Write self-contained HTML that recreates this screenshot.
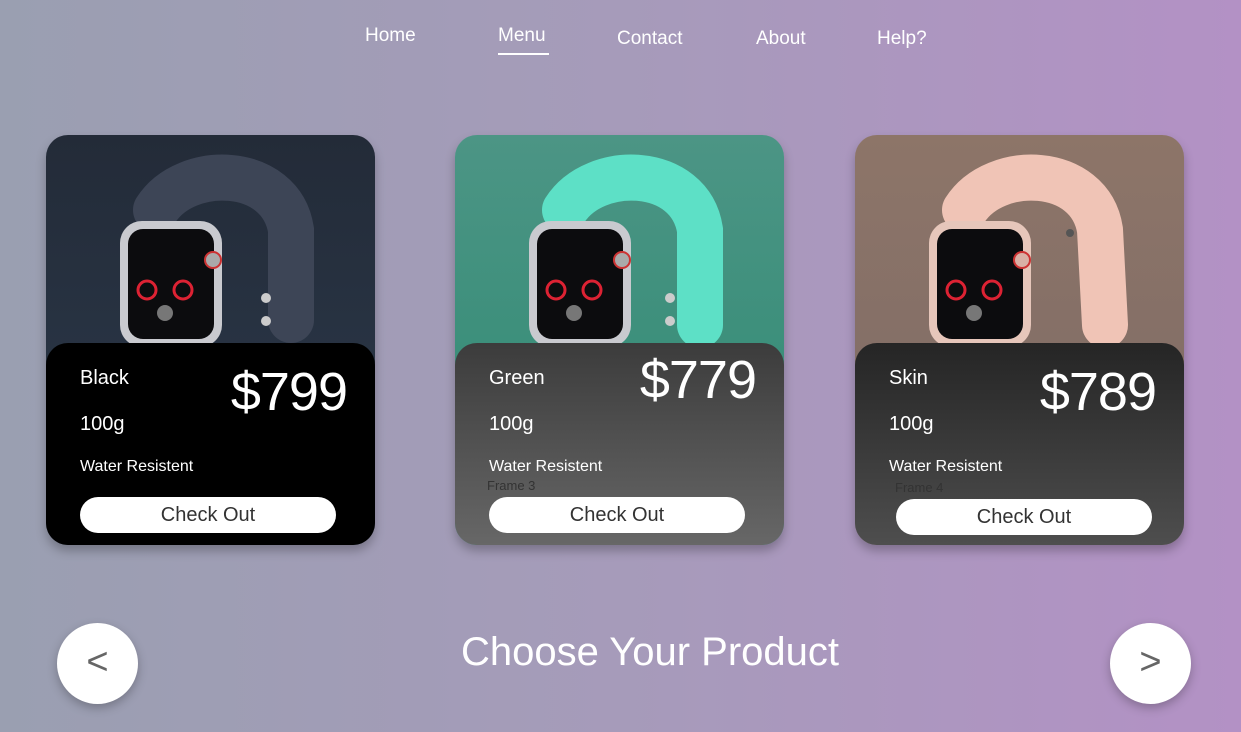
<!DOCTYPE html>
<html><head><style>
*{margin:0;padding:0;box-sizing:border-box}
body{width:1241px;height:732px;overflow:hidden;font-family:"Liberation Sans",sans-serif;background:linear-gradient(90deg,#9a9fb1 0%,#a69bba 50%,#b391c5 100%);position:relative}
.nav{position:absolute;color:#fff;font-size:19px;top:26px}
.card{position:absolute;top:135px;width:329px;height:410px;border-radius:22px;overflow:hidden;box-shadow:0 6px 10px rgba(0,0,0,.25)}
.card svg{position:absolute;left:0;top:0}
.info{position:absolute;left:0;top:208px;width:329px;height:202px;border-radius:22px 22px 0 0;color:#fff}
.t{position:absolute;left:34px;font-weight:300}
.price{position:absolute;right:28px;font-size:54px;font-weight:300;letter-spacing:-1px}
.btn{position:absolute;left:34px;top:154px;width:256px;height:36px;background:#fff;border-radius:18px;color:#333;font-size:20px;text-align:center;line-height:36px}
.frame{position:absolute;left:32px;font-size:13px;color:#333}
.circ{position:absolute;top:623px;width:81px;height:81px;border-radius:50%;background:#fff;box-shadow:0 4px 10px rgba(0,0,0,.25);color:#666;font-size:38px;text-align:center;line-height:78px}
</style></head><body>
<div class="nav" style="left:365px;top:25px">Home</div>
<div class="nav" style="left:498px;top:25px">Menu</div>
<div style="position:absolute;left:498px;top:53px;width:51px;height:2px;background:#fff"></div>
<div class="nav" style="left:617px;top:28px">Contact</div>
<div class="nav" style="left:756px;top:28px">About</div>
<div class="nav" style="left:877px;top:28px">Help?</div>

<!-- card 1 -->
<div class="card" style="left:46px;background:linear-gradient(180deg,#232b38,#2c3a4c)">
<svg width="329" height="410"><path d="M110 75 C140 28 235 30 245 95 L245 185" stroke="#3d4556" stroke-width="46" fill="none" stroke-linecap="round"/><circle cx="220" cy="163" r="5" fill="#ccc"/><circle cx="220" cy="186" r="5" fill="#ccc"/>
<rect x="74" y="86" width="102" height="126" rx="22" fill="#c9cacf"/><rect x="82" y="94" width="86" height="110" rx="15" fill="#0c0c0e"/><circle cx="167" cy="125" r="8" fill="#aaa" stroke="#c33" stroke-width="2"/><circle cx="101" cy="155" r="9" fill="none" stroke="#d23" stroke-width="3"/><circle cx="137" cy="155" r="9" fill="none" stroke="#d23" stroke-width="3"/><circle cx="119" cy="178" r="8" fill="#777"/></svg>
<div class="info" style="background:#000">
<div class="t" style="top:24px;font-size:20px">Black</div>
<div class="price" style="top:18px">$799</div>
<div class="t" style="top:70px;font-size:20px">100g</div>
<div class="t" style="top:115px;font-size:16px">Water Resistent</div>
<div class="btn">Check Out</div></div></div>

<!-- card 2 -->
<div class="card" style="left:455px;background:linear-gradient(180deg,#4c9585,#2e8a72)">
<svg width="329" height="410"><path d="M110 75 C140 28 235 30 245 95 L245 190" stroke="#5de0c6" stroke-width="46" fill="none" stroke-linecap="round"/><circle cx="215" cy="163" r="5" fill="#ccc"/><circle cx="215" cy="186" r="5" fill="#ccc"/>
<rect x="74" y="86" width="102" height="126" rx="22" fill="#c9cacf"/><rect x="82" y="94" width="86" height="110" rx="15" fill="#0c0c0e"/><circle cx="167" cy="125" r="8" fill="#aaa" stroke="#c33" stroke-width="2"/><circle cx="101" cy="155" r="9" fill="none" stroke="#d23" stroke-width="3"/><circle cx="137" cy="155" r="9" fill="none" stroke="#d23" stroke-width="3"/><circle cx="119" cy="178" r="8" fill="#777"/></svg>
<div class="info" style="background:linear-gradient(180deg,#3c3c3c,#676767)">
<div class="t" style="top:24px;font-size:20px">Green</div>
<div class="price" style="top:6px">$779</div>
<div class="t" style="top:70px;font-size:20px">100g</div>
<div class="t" style="top:115px;font-size:16px">Water Resistent</div>
<div class="frame" style="top:135px">Frame 3</div>
<div class="btn">Check Out</div></div></div>

<!-- card 3 -->
<div class="card" style="left:855px;background:linear-gradient(180deg,#8d7568,#7d6a66)">
<svg width="329" height="410"><path d="M110 75 C140 28 235 30 245 95 L250 190" stroke="#f0c4b6" stroke-width="46" fill="none" stroke-linecap="round"/><circle cx="215" cy="98" r="4" fill="#555"/>
<rect x="74" y="86" width="102" height="126" rx="22" fill="#e6c6ba"/><rect x="82" y="94" width="86" height="110" rx="15" fill="#0c0c0e"/><circle cx="167" cy="125" r="8" fill="#d9b0a5" stroke="#c33" stroke-width="2"/><circle cx="101" cy="155" r="9" fill="none" stroke="#d23" stroke-width="3"/><circle cx="137" cy="155" r="9" fill="none" stroke="#d23" stroke-width="3"/><circle cx="119" cy="178" r="8" fill="#777"/></svg>
<div class="info" style="background:linear-gradient(180deg,#252525,#4e4e4e)">
<div class="t" style="top:24px;font-size:20px">Skin</div>
<div class="price" style="top:18px">$789</div>
<div class="t" style="top:70px;font-size:20px">100g</div>
<div class="t" style="top:115px;font-size:16px">Water Resistent</div>
<div class="frame" style="top:137px;left:40px">Frame 4</div>
<div class="btn" style="left:41px;top:156px">Check Out</div></div></div>

<div style="position:absolute;left:0;width:1300px;text-align:center;top:630px;font-size:40px;color:#fff;font-weight:300">Choose Your Product</div>
<div class="circ" style="left:57px">&lt;</div>
<div class="circ" style="left:1110px">&gt;</div>
</body></html>
